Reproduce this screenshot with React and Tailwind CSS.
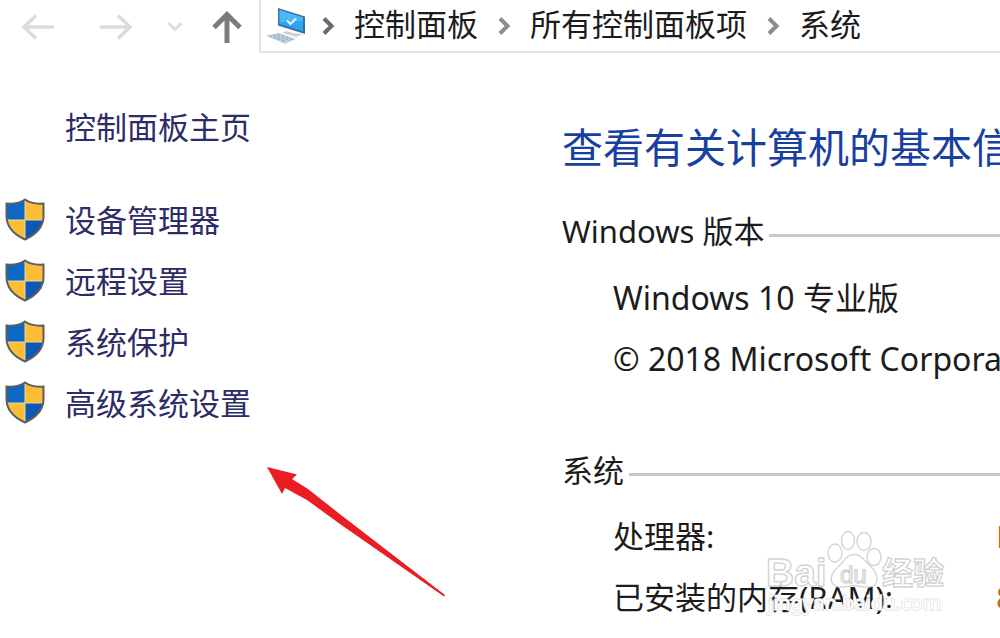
const cjk = "font-['Noto_Sans','Noto_Sans_CJK_SC',sans-serif]"

const tasks = ['设备管理器', '远程设置', '系统保护', '高级系统设置']

const specs = [
  { label: '处理器:', value: 'Intel(R)' },
  { label: '已安装的内存(RAM):', value: '8.00 GB' },
]

const crumbs = ['控制面板', '所有控制面板项', '系统']

function Chevron({ className }) {
  return (
    <svg viewBox="0 0 16 20" className={`w-4 h-5 shrink-0 ${className}`} fill="none" stroke="currentColor" strokeWidth="4">
      <path d="M4 2.5 L11.5 10 L4 17.5" />
    </svg>
  )
}

function ComputerIcon() {
  return (
    <svg viewBox="0 0 40 38" className="w-10 h-[38px] shrink-0 -mr-1">
      <path d="M0 28.5 L13 26 L30 32 L19 37 Z" fill="#c3d2de" />
      <path d="M3 29 L20 34.5 M7 28 L24 33.5 M11 27 L27 32.5" stroke="#8fa5b5" strokeWidth="1" strokeDasharray="3 1.5" />
      <path d="M20 24 L27 26 L37 27 L30 30 L17 26 Z" fill="#cfcfd2" />
      <path d="M12 1 L39 9.500 L39 27 L12 18.500 Z" fill="#3d6d92" />
      <path d="M13.500 3 L37 10.500 L37 24.500 L13.500 17 Z" fill="#2aa5f5" />
      <path d="M13.500 3 L37 10.500 L37 14 L13.500 15 Z" fill="#4bb6f8" />
      <path d="M21 13.500 L24.500 17 L30 11.500" fill="none" stroke="#e9f6ff" strokeWidth="2" />
    </svg>
  )
}

function Shield() {
  const outline = 'M20 1.500 C15 5 8 6 1.500 5.500 V18 C1.500 29 9 36.500 20 41.500 C31 36.500 38.500 29 38.500 18 V5.500 C32 6 25 5 20 1.500 Z'
  return (
    <svg viewBox="0 0 40 43" className="w-10 h-[43px] shrink-0" aria-hidden="true">
      <clipPath id="shield">
        <path d={outline} />
      </clipPath>
      <g clipPath="url(#shield)">
        <rect width="20" height="22" fill="#0c68c4" />
        <rect x="20" width="20" height="22" fill="#fdbe36" />
        <rect y="22" width="20" height="21" fill="#fdbe36" />
        <rect x="20" y="22" width="20" height="21" fill="#0c58b4" />
        <path d="M20 0 V43 M0 22 H40" stroke="#e8d9a4" strokeWidth="1" />
      </g>
      <path d={outline} fill="none" stroke="#5c5f62" strokeWidth="2" />
    </svg>
  )
}

function Section({ title, children }) {
  return (
    <section>
      <div className="flex items-center gap-[5px]">
        <h2 className="leading-10">{title}</h2>
        <div className="flex-1 h-[3px] mt-2 bg-[#c9c9c9]" />
      </div>
      <div className="pl-[51px] mt-4">{children}</div>
    </section>
  )
}

function Watermark() {
  return (
    <svg viewBox="0 0 190 94" className="absolute left-[764px] top-[526px] w-[190px] h-[94px] pointer-events-none">
      <g fill="#fff" fillOpacity="0.8" stroke="#d2d2d2" strokeWidth="1.300">
        <ellipse cx="71" cy="27" rx="7" ry="9" />
        <ellipse cx="84" cy="14.500" rx="6.500" ry="9" />
        <ellipse cx="100" cy="15.500" rx="7" ry="9" />
        <ellipse cx="110" cy="31" rx="7" ry="8.500" />
        <path d="M90 28.500 C98 28.500 101 36 107 41 C114 47 117 60 105 61 C99 62 95 59.500 90 59.500 C85 59.500 80 62 75 61 C64 59 66 48 73 42 C79 37 82 28.500 90 28.500 Z" />
        <text x="2" y="60" fontSize="39" fontWeight="700" fontFamily="Liberation Sans">Bai</text>
        <text x="76" y="57" fontSize="24" fontWeight="400" fontFamily="Liberation Sans">du</text>
        <text x="118" y="58" fontSize="31" fontWeight="700" fontFamily="Noto Sans CJK SC">经验</text>
      </g>
      <text x="4" y="84" fontSize="20" fontFamily="Noto Sans" fill="#fff" stroke="#dedede" strokeWidth="1.500" paintOrder="stroke">
        jingyan.baidu.com
      </text>
    </svg>
  )
}

export default function App() {
  return (
    <div className={`relative min-h-screen overflow-hidden bg-white text-[31px] text-[#1c1c1c] whitespace-nowrap ${cjk}`}>
      <header className="flex h-[53px]">
        <nav className="flex shrink-0 text-[#dcdcdc]">
          <button className="w-[76px] flex items-center justify-center" aria-label="后退">
            <svg viewBox="0 0 34 26" className="w-[34px] h-[26px]" fill="none" stroke="currentColor" strokeWidth="3.500">
              <path d="M33 13 H3 M15 1.500 L3 13 L15 24.500" />
            </svg>
          </button>
          <button className="w-20 flex items-center justify-center" aria-label="前进">
            <svg viewBox="0 0 34 26" className="w-[34px] h-[26px]" fill="none" stroke="currentColor" strokeWidth="3.500">
              <path d="M1 13 H31 M19 1.500 L31 13 L19 24.500" />
            </svg>
          </button>
          <button className="w-[38px] flex items-center justify-center" aria-label="最近的位置">
            <svg viewBox="0 0 16 12" className="w-4 h-3" fill="none" stroke="currentColor" strokeWidth="3">
              <path d="M1.500 2 L8 8.500 L14.500 2" />
            </svg>
          </button>
          <button className="w-[65px] flex items-center justify-center text-[#7c7c7c]" aria-label="向上">
            <svg viewBox="0 0 30 32" className="w-[30px] h-8" fill="none" stroke="currentColor" strokeWidth="5">
              <path d="M15 32 V4 M2 16.500 L15 3.500 L28 16.500" />
            </svg>
          </button>
        </nav>
        <div className="flex flex-1 items-center gap-[18px] pl-[5px] border-l-2 border-b-2 border-[#e2e2e2]">
          <ComputerIcon />
          <ol className="flex items-center gap-[18px]">
            {crumbs.map((c, i) => (
              <li key={c} className="flex items-center gap-[18px]">
                <Chevron className={i === 0 ? 'text-[#6a6a6a]' : 'text-[#8c8c8c]'} />
                <a href="#" className="leading-10 pb-1">{c}</a>
              </li>
            ))}
          </ol>
        </div>
      </header>

      <div className="flex">
        <aside className="w-[562px] shrink-0 pt-[54px] text-[#2c2c66]">
          <a href="#" className="block pl-[65px] leading-10">控制面板主页</a>
          <ul className="pl-[5px] mt-[42px]">
            {tasks.map((t) => (
              <li key={t}>
                <a href="#" className="flex items-center gap-5 h-[61px]">
                  <Shield />
                  <span className="leading-10">{t}</span>
                </a>
              </li>
            ))}
          </ul>
        </aside>

        <main className="flex-1 min-w-0 pt-[70px]">
          <h1 className="text-[41px] leading-[48px] mb-10 text-[#1740a0]">查看有关计算机的基本信息</h1>
          <Section title="Windows 版本">
            <p className="text-[32px] leading-[61px]">Windows 10 专业版</p>
            <p className="text-[32px] leading-[61px]">© 2018 Microsoft Corporation</p>
          </Section>
          <div className="h-[61px]" />
          <Section title="系统">
            <dl>
              {specs.map((s) => (
                <div key={s.label} className="flex leading-[61px]">
                  <dt className="w-[383px] shrink-0">{s.label}</dt>
                  <dd className="font-['Open_Sans',sans-serif] text-[#b06a2c]">{s.value}</dd>
                </div>
              ))}
            </dl>
          </Section>
        </main>
      </div>

      {/* pointer to the advanced settings link */}
      <svg viewBox="0 0 182 132" className="absolute left-[265px] top-[466px] w-[182px] h-[132px] pointer-events-none">
        <path d="M2 1 L32 8.500 L27 13 L43 23 L76 49 L180 129 L179 130.500 L75 58 L42 34 L20 22 L17 28 Z" fill="#ea1c24" />
      </svg>
      <Watermark />
    </div>
  )
}
